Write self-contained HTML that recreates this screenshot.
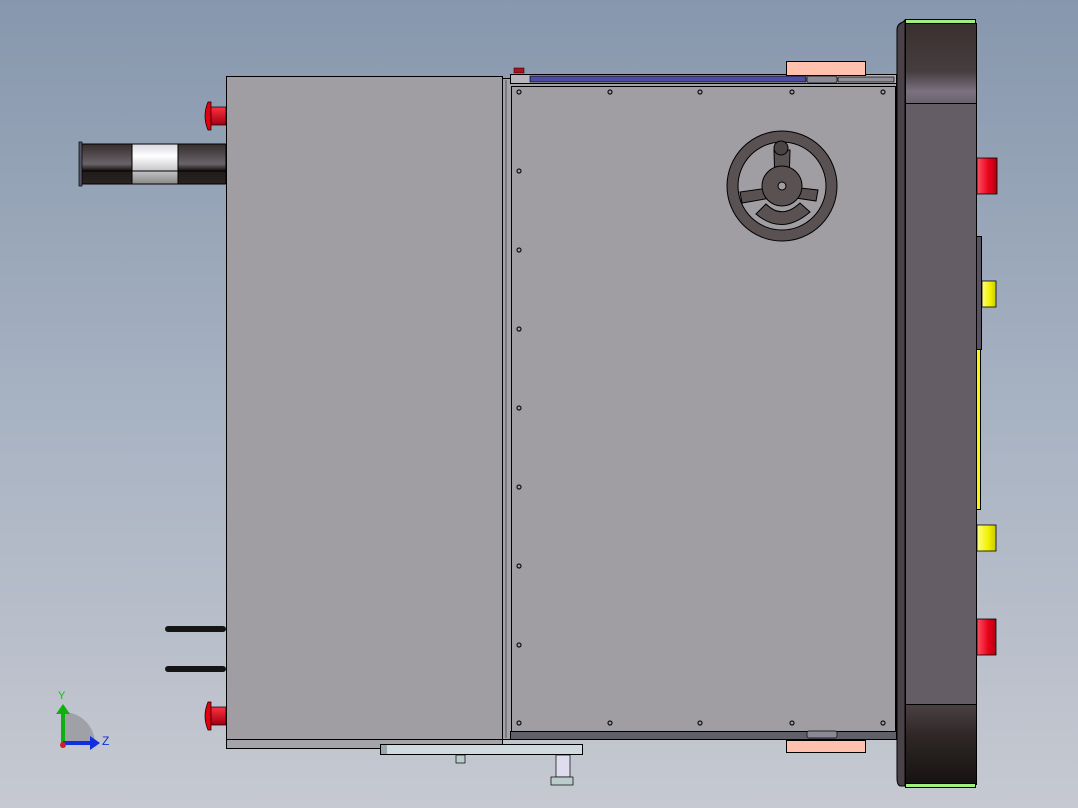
<!DOCTYPE html><html><head><style>html,body{margin:0;padding:0}body{width:1078px;height:808px;overflow:hidden;background:linear-gradient(#8797ad,#a7b2c2 50%,#c6c9d1)}</style></head><body>
<svg width="1078" height="808" viewBox="0 0 1078 808" xmlns="http://www.w3.org/2000/svg" style="position:absolute;left:0;top:0">
<defs>
<linearGradient id="pipe" x1="0" y1="0" x2="0" y2="1"><stop offset="0" stop-color="#352e2d"/><stop offset=".5" stop-color="#6a636a"/><stop offset=".65" stop-color="#1e1a18"/><stop offset="1" stop-color="#2a2422"/></linearGradient>
<linearGradient id="wht" x1="0" y1="0" x2="0" y2="1"><stop offset="0" stop-color="#d8d8e0"/><stop offset=".3" stop-color="#fff"/><stop offset=".65" stop-color="#c8c8cc"/><stop offset="1" stop-color="#888"/></linearGradient>
<linearGradient id="red" x1="0" y1="0" x2="1" y2="0"><stop offset="0" stop-color="#ff5060"/><stop offset=".6" stop-color="#e8001a"/><stop offset="1" stop-color="#b00010"/></linearGradient>
<linearGradient id="redv" x1="0" y1="0" x2="0" y2="1"><stop offset="0" stop-color="#ff3040"/><stop offset="1" stop-color="#a00010"/></linearGradient>
<linearGradient id="yel" x1="0" y1="0" x2="1" y2="0"><stop offset="0" stop-color="#ffff80"/><stop offset=".6" stop-color="#f0f000"/><stop offset="1" stop-color="#c8c800"/></linearGradient>
<linearGradient id="topd" x1="0" y1="0" x2="0" y2="1"><stop offset="0" stop-color="#3a302f"/><stop offset=".6" stop-color="#463d3f"/><stop offset=".85" stop-color="#7a7280"/><stop offset="1" stop-color="#6a636d"/></linearGradient>
<linearGradient id="botd" x1="0" y1="0" x2="0" y2="1"><stop offset="0" stop-color="#4a4043"/><stop offset=".4" stop-color="#2e2726"/><stop offset="1" stop-color="#161211"/></linearGradient>
</defs>
<rect x="80" y="144" width="146" height="40" fill="url(#pipe)" stroke="#000"/>
<rect x="132" y="144" width="46" height="40" fill="url(#wht)" stroke="#000"/>
<line x1="80" y1="171" x2="226" y2="171" stroke="#000"/>
<rect x="79" y="142" width="3" height="44" fill="#556" stroke="#000" stroke-width=".7"/>
<g><rect x="210" y="107" width="16" height="18" fill="url(#redv)" stroke="#000" stroke-width=".7"/><path d="M208 102 Q202 116 208 130 L211 130 L211 102Z" fill="#e00010" stroke="#000" stroke-width=".7"/></g>
<g><rect x="210" y="707" width="16" height="18" fill="url(#redv)" stroke="#000" stroke-width=".7"/><path d="M208 702 Q202 716 208 730 L211 730 L211 702Z" fill="#e00010" stroke="#000" stroke-width=".7"/></g>
<rect x="165" y="626" width="61" height="6" rx="3" fill="#151515"/>
<rect x="165" y="666" width="61" height="6" rx="3" fill="#151515"/>
<rect x="226.5" y="76.5" width="276" height="663" fill="#a09ea3" stroke="#000"/>
<rect x="226.5" y="739.5" width="276" height="9" fill="#a5a4a8" stroke="#000"/>
<rect x="380.5" y="744.5" width="202" height="10" fill="#cfdbe0" stroke="#000"/>
<rect x="381" y="745" width="6" height="9" fill="#9aa"/>
<rect x="456" y="755" width="9" height="8" fill="#bcc" stroke="#000" stroke-width=".7"/>
<rect x="556" y="755" width="14" height="22" fill="#dde" stroke="#000" stroke-width=".7"/>
<rect x="551" y="777" width="22" height="8" fill="#bcc" stroke="#000" stroke-width=".7"/>
<rect x="502.5" y="78.5" width="394" height="661" fill="#a4a3a8" stroke="#000"/>
<rect x="511.5" y="86.5" width="384" height="645" fill="#a09ea3" stroke="#000"/>
<line x1="506" y1="80" x2="506" y2="738" stroke="#555" />
<rect x="510.5" y="74.5" width="386" height="9" fill="#b8b6bc" stroke="#000"/>
<rect x="530" y="76" width="276" height="6" fill="#4c4ca0" stroke="#000" stroke-width=".7"/>
<rect x="807" y="76" width="30" height="7" rx="2" fill="#8a8a96" stroke="#000" stroke-width=".7"/>
<rect x="838" y="77" width="56" height="5" fill="#909098" stroke="#000" stroke-width=".7"/>
<rect x="514" y="68" width="10" height="5" fill="#b01020" stroke="#000" stroke-width=".5"/>
<rect x="786.5" y="61.5" width="79" height="14" fill="#ffc0ad" stroke="#000"/>
<rect x="510.5" y="731.5" width="386" height="8" fill="#606068" stroke="#000"/>
<rect x="807" y="731" width="30" height="7" rx="2" fill="#8a8a96" stroke="#000" stroke-width=".7"/>
<rect x="786.5" y="740.5" width="79" height="12" fill="#ffc0ad" stroke="#000"/>
<g fill="none" stroke="#111" stroke-width="1.2">
<circle cx="519" cy="92" r="2"/><circle cx="610" cy="92" r="2"/><circle cx="700" cy="92" r="2"/><circle cx="792" cy="92" r="2"/><circle cx="883" cy="92" r="2"/>
<circle cx="519" cy="171" r="2"/><circle cx="519" cy="250" r="2"/><circle cx="519" cy="329" r="2"/><circle cx="519" cy="408" r="2"/><circle cx="519" cy="487" r="2"/><circle cx="519" cy="566" r="2"/><circle cx="519" cy="645" r="2"/>
<circle cx="519" cy="723" r="2"/><circle cx="610" cy="723" r="2"/><circle cx="700" cy="723" r="2"/><circle cx="792" cy="723" r="2"/><circle cx="883" cy="723" r="2"/>
</g>
<g stroke="#000" stroke-width="1">
<circle cx="782" cy="186" r="55" fill="#5a5252"/>
<circle cx="782" cy="186" r="44" fill="#a09ea3"/>
<path d="M782 186 L740 192 L742 203 L782 196Z" fill="#5a5252"/>
<path d="M782 186 L818 190 L816 201 L782 196Z" fill="#5a5252"/>
<path d="M756 214 Q782 236 810 212 L800 203 Q782 220 766 204Z" fill="#5a5252"/>
<path d="M775 186 L774 150 L790 150 L789 186Z" fill="#5a5252"/>
<circle cx="781" cy="148" r="7" fill="#4a4444"/>
<circle cx="782" cy="186" r="20" fill="#5a5252"/>
<circle cx="782" cy="186" r="4" fill="#a09ea3"/>
</g>
<path d="M905 20 L905 786 L901 786 Q897 786 897 778 L897 30 Q897 24 903 22Z" fill="#4a4248" stroke="#000"/>
<rect x="905.5" y="23.5" width="71" height="80" fill="url(#topd)" stroke="#000"/>
<rect x="905.5" y="103.5" width="71" height="601" fill="#645d66" stroke="#000"/>
<rect x="905.5" y="704.5" width="71" height="80" fill="url(#botd)" stroke="#000"/>
<rect x="905.5" y="19.5" width="70" height="4" fill="#a0f080" stroke="#000"/>
<rect x="905.5" y="783.5" width="70" height="4" fill="#a0f080" stroke="#000"/>
<rect x="977" y="158" width="20" height="36" fill="url(#red)" stroke="#000" stroke-width=".8"/>
<rect x="976.5" y="236.5" width="5" height="113" fill="#5a5260" stroke="#000"/>
<rect x="982" y="281" width="14" height="26" fill="url(#yel)" stroke="#000" stroke-width=".8"/>
<rect x="976.5" y="349.5" width="4" height="160" fill="#f8f800" stroke="#000"/>
<rect x="977" y="525" width="19" height="26" fill="url(#yel)" stroke="#000" stroke-width=".8"/>
<rect x="977" y="619" width="19" height="36" fill="url(#red)" stroke="#000" stroke-width=".8"/>
<path d="M63 744 L63 712 A32 32 0 0 1 95 744Z" fill="#a0a0a8"/>
<rect x="61" y="712" width="4" height="32" fill="#10b010"/>
<path d="M56 714 L63 704 L70 714Z" fill="#10b010"/>
<rect x="63" y="741" width="28" height="4" fill="#1030e0"/>
<path d="M90 736 L100 743 L90 750Z" fill="#1030e0"/>
<circle cx="63" cy="745" r="3" fill="#d02020"/>
<text x="58" y="699" font-family="Liberation Sans, sans-serif" font-size="11" fill="#10c010">Y</text>
<text x="102" y="745" font-family="Liberation Sans, sans-serif" font-size="12" fill="#1030e0">Z</text>
</svg>
</body></html>
